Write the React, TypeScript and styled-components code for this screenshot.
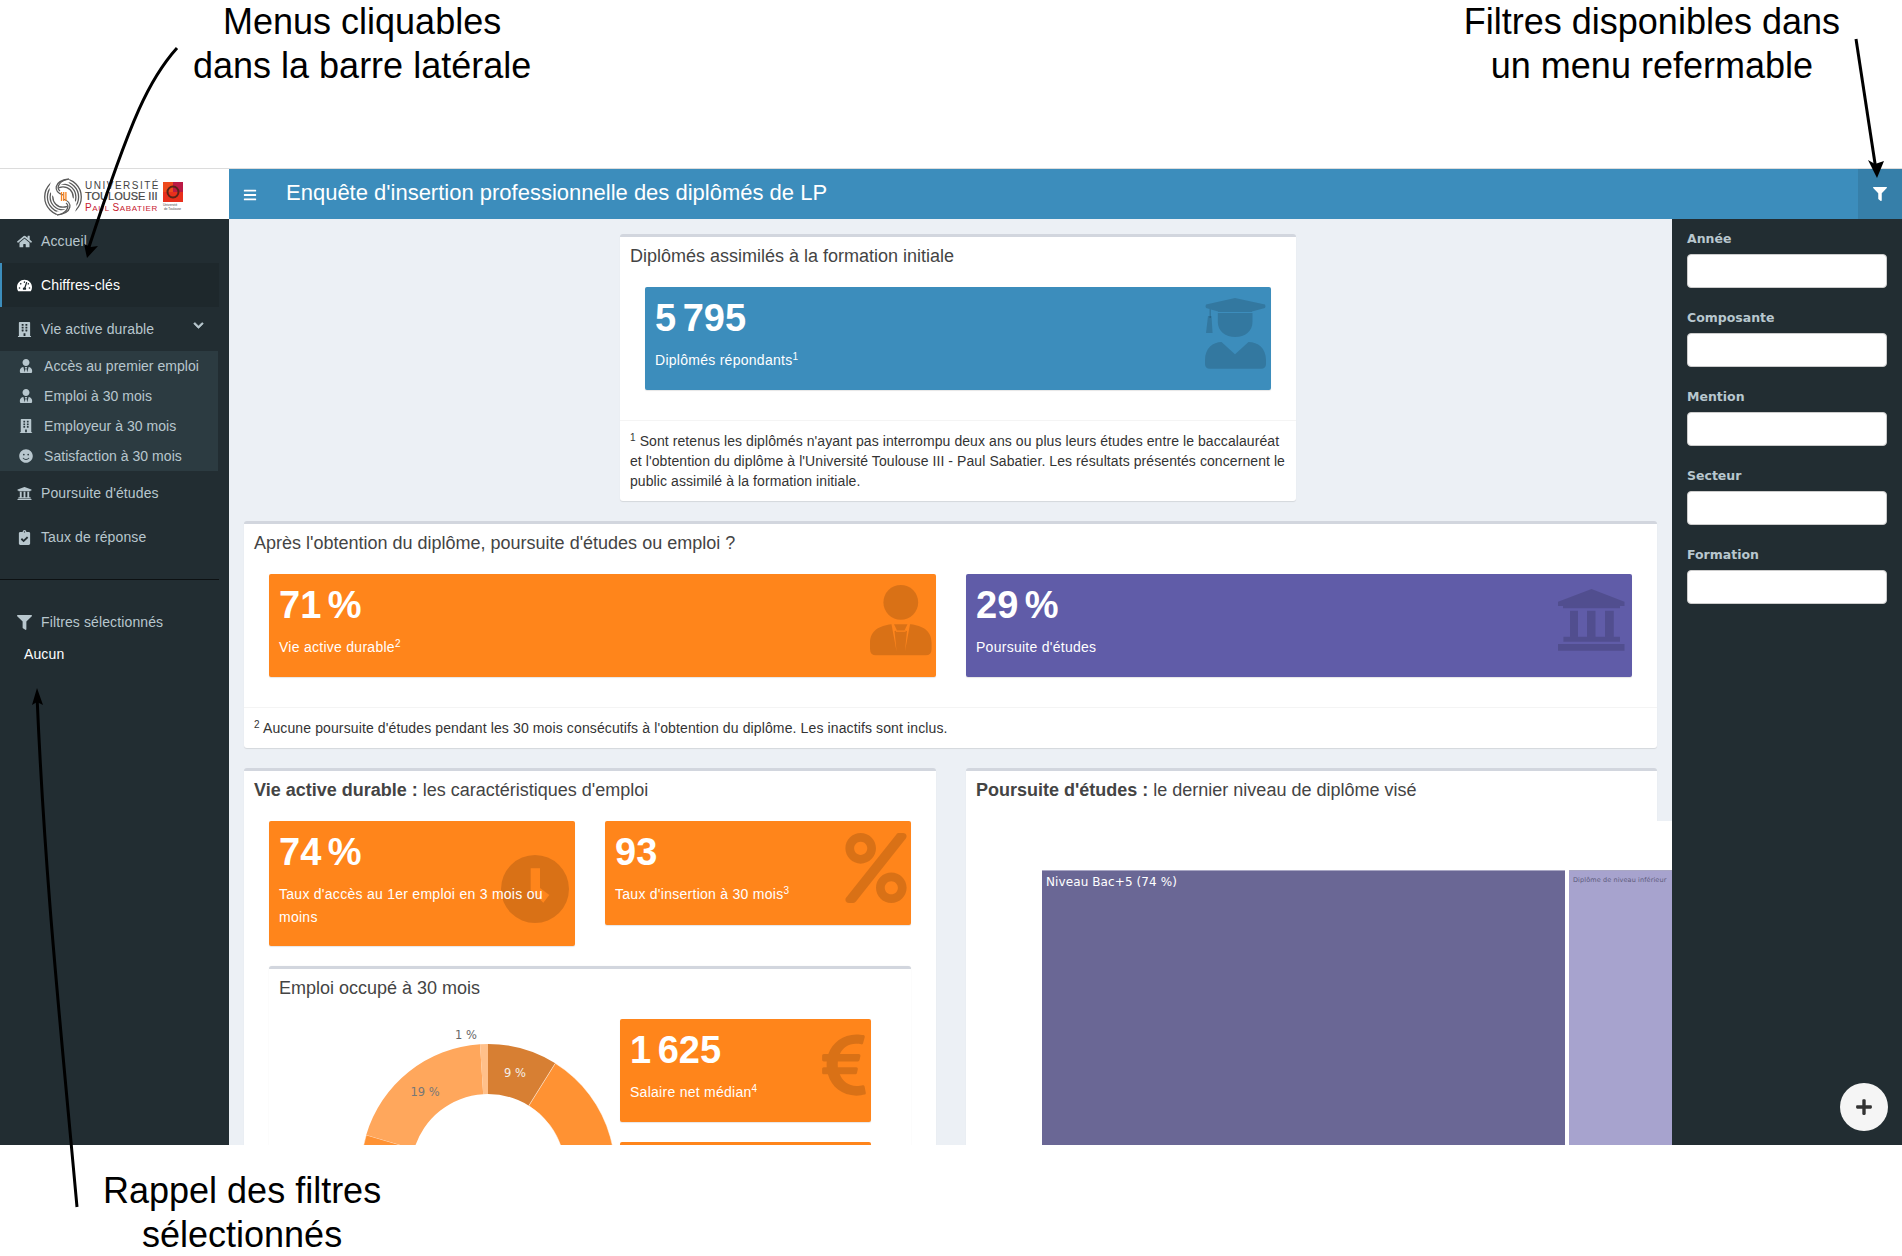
import React from "react";
import styled, { createGlobalStyle } from "styled-components";
import {
  FaHome, FaTachometerAlt, FaBuilding, FaUserTie, FaSmile, FaUniversity, FaClipboardCheck,
  FaFilter, FaChevronDown, FaBars, FaPercent, FaEuroSign, FaPlus,
} from "react-icons/fa";

const Global = createGlobalStyle`
  html, body { margin: 0; padding: 0; background: #fff; }
  body { width: 1902px; height: 1256px; overflow: hidden; font-family: "Liberation Sans", Arial, sans-serif; color: #333; }
  * { box-sizing: border-box; }
  sup { font-size: 10px; line-height: 0; position: relative; top: -0.5em; vertical-align: baseline; }
`;

const Page = styled.div`
  position: relative;
  width: 1902px;
  height: 1256px;
  display: flex;
  flex-direction: column;
`;
const Notes = styled.div`
  height: 168px;
  flex: none;
  display: flex;
  justify-content: space-between;
  padding: 0 62px 0 193px;
`;
const Note = styled.div`
  font-size: 36px;
  line-height: 44px;
  color: #000;
  text-align: center;
  white-space: nowrap;
`;
const BottomNotes = styled(Notes)`
  height: 111px;
  padding: 24px 0 0 103px;
`;
const Frame = styled.div`
  flex: none;
  height: 977px;
  border-top: 1px solid #dcdcdc;
  display: grid;
  grid-template-columns: 229px 1fr 230px;
  grid-template-rows: 50px 1fr;
  overflow: hidden;
`;
const LogoCell = styled.div`
  background: #fff;
  display: flex;
`;
const TopBar = styled.div`
  grid-column: 2 / 4;
  background: #3c8dbc;
  display: flex;
  align-items: center;
  color: #fff;
  padding-left: 14px;
`;
const Burger = styled.span`
  display: flex;
  font-size: 14px;
  margin-top: 2px;
`;
const AppTitle = styled.h1`
  margin: 0 0 0 29px;
  padding-bottom: 2px;
  font-size: 22px;
  line-height: 48px;
  font-weight: 400;
  flex: 1;
`;
const FilterToggle = styled.button`
  width: 44px;
  height: 50px;
  border: 0;
  padding: 0;
  background: #367fa9;
  color: #fff;
  font-size: 14px;
  display: flex;
  align-items: center;
  justify-content: center;
`;
const Side = styled.nav`
  background: #222d32;
  width: 229px;
  color: #b8c7ce;
  font-size: 14px;
  letter-spacing: 0.12px;
`;
const Item = styled.div<{ $active?: boolean }>`
  width: 219px;
  height: 44px;
  display: flex;
  align-items: center;
  position: relative;
  color: ${(p) => (p.$active ? "#fff" : "#b8c7ce")};
  background: ${(p) => (p.$active ? "#1e282c" : "transparent")};
  border-left: 2px solid ${(p) => (p.$active ? "#3c8dbc" : "transparent")};
  padding-left: 15px;
`;
const ItemIcon = styled.span`
  width: 24px;
  flex: none;
  display: flex;
  font-size: 15px;
`;
const Chevron = styled.span`
  position: absolute;
  right: 15px;
  top: 13px;
  display: flex;
  font-size: 11px;
  svg { stroke-width: 30px; }
`;
const Sub = styled.div`
  width: 218px;
  background: #2c3b41;
  color: #b8c7ce;
  letter-spacing: 0.04px;
`;
const SubItem = styled.div`
  height: 30px;
  display: flex;
  align-items: center;
  padding-left: 19px;
`;
const SubIcon = styled.span`
  width: 25px;
  flex: none;
  display: flex;
  font-size: 14px;
`;
const Rule = styled.hr`
  width: 219px;
  margin: 20px 0;
  border: 0;
  border-top: 1px solid #0d1113;
`;
const Chosen = styled.div`
  padding-left: 24px;
  color: #fff;
  font-size: 14px;
  line-height: 20px;
`;
const Main = styled.main`
  background: #ecf0f5;
  padding: 15px 15px 0;
  overflow: hidden;
  min-width: 0;
  position: relative;
`;
const Box = styled.section<{ $width?: string; $plain?: boolean }>`
  background: #fff;
  border-top: 3px solid #d2d6de;
  border-radius: 3px;
  box-shadow: ${(p) => (p.$plain ? "0 0 1px rgba(0,0,0,.12)" : "0 1px 1px rgba(0,0,0,.1)")};
  width: ${(p) => p.$width || "auto"};
`;
const TopRow = styled.div`
  display: flex;
  justify-content: center;
  padding-left: 15px;
  margin-bottom: 20px;
`;
const Head = styled.h3`
  margin: 0;
  padding: 9px 10px 11px;
  font-size: 18px;
  line-height: 20px;
  font-weight: 400;
  color: #444;
  b { font-weight: 700; }
`;
const Body = styled.div`
  padding: 10px 25px 30px;
`;
const Foot = styled.div<{ $spacing: number }>`
  border-top: 1px solid #f4f4f4;
  padding: 10px;
  font-size: 14px;
  line-height: 20px;
  letter-spacing: ${(p) => p.$spacing}px;
  color: #333;
`;
const Tile = styled.div<{ $bg: string; $h: number }>`
  position: relative;
  overflow: hidden;
  background: ${(p) => p.$bg};
  height: ${(p) => p.$h}px;
  border-radius: 2px;
  box-shadow: 0 1px 1px rgba(0,0,0,.1);
  color: #fff;
  padding: 10px;
`;
const Big = styled.div`
  font-size: 38px;
  line-height: 42px;
  font-weight: 700;
  margin-bottom: 10px;
  word-spacing: -4px;
  white-space: nowrap;
`;
const Label = styled.div`
  font-size: 14px;
  line-height: 22.5px;
  letter-spacing: 0.27px;
  position: relative;
  z-index: 1;
`;
const Ghost = styled.span<{ $size: number; $top: number; $right: number }>`
  position: absolute;
  top: ${(p) => p.$top}px;
  right: ${(p) => p.$right}px;
  font-size: ${(p) => p.$size}px;
  display: flex;
  color: rgba(0,0,0,.15);
`;
const TwoTiles = styled.div`
  display: grid;
  grid-template-columns: 667px 666px;
  column-gap: 30px;
  padding: 10px 25px 30px;
`;
const Split = styled.div`
  display: grid;
  grid-template-columns: 692px 691px;
  column-gap: 30px;
  margin-top: 20px;
  align-items: start;
`;
const Column = styled.section`
  background: #fff;
  border-top: 3px solid #d2d6de;
  border-radius: 3px;
  height: 500px;
  position: relative;
  box-shadow: 0 1px 1px rgba(0,0,0,.1);
`;
const SmallPair = styled.div`
  display: grid;
  grid-template-columns: 306px 306px;
  column-gap: 30px;
  align-items: start;
  padding: 10px 25px 20px;
`;
const Inner = styled(Box)`
  margin: 0 25px;
`;
const InnerBody = styled.div`
  display: grid;
  grid-template-columns: 351px 251px;
  padding-top: 10px;
`;
const DonutWrap = styled.div`
  height: 170px;
  position: relative;
`;
const Side2 = styled.div`
  display: flex;
  flex-direction: column;
  gap: 20px;
`;
const ChartPane = styled.div`
  position: absolute;
  left: 0;
  right: -15px;
  top: 50px;
  height: 450px;
  background: #fff;
  padding: 49px 0 0 76px;
  display: flex;
  gap: 4px;
  overflow: hidden;
`;
const Tree = styled.div<{ $bg: string; $w: number }>`
  width: ${(p) => p.$w}px;
  flex: none;
  height: 400px;
  background: ${(p) => p.$bg};
  border-top: 1px solid #a9a7c4;
  padding: 4px;
  color: #fff;
  font-family: "DejaVu Sans", sans-serif;
  font-size: 12px;
  letter-spacing: 0.1px;
  line-height: 14px;
  white-space: nowrap;
`;
const TinyLabel = styled.span`
  font-size: 6.5px;
  color: #5d5b7c;
  line-height: 10px;
  display: block;
`;
const FilterPanel = styled.aside`
  background: #222d32;
  padding: 12px 15px 0;
  position: relative;
`;
const Field = styled.div`
  margin-bottom: 22px;
`;
const FieldLabel = styled.label`
  display: block;
  color: #b8c7ce;
  font-family: "DejaVu Sans", sans-serif;
  font-weight: 700;
  font-size: 12.5px;
  line-height: 16px;
  margin-bottom: 7px;
`;
const Input = styled.div`
  height: 34px;
  width: 200px;
  background: #fff;
  border: 1px solid #ccc;
  border-radius: 4px;
`;
const Fab = styled.button`
  position: absolute;
  left: 168px;
  top: 864px;
  width: 48px;
  height: 48px;
  border-radius: 50%;
  border: 0;
  padding: 0;
  background: #f5f5f5;
  color: #333;
  font-size: 18px;
  display: flex;
  align-items: center;
  justify-content: center;
`;
const Arrows = styled.svg`
  position: absolute;
  inset: 0;
  width: 1902px;
  height: 1256px;
  pointer-events: none;
`;
const ChartText = styled.text<{ $fill: string }>`
  font-family: "DejaVu Sans", sans-serif;
  font-size: 11.5px;
  fill: ${(p) => p.$fill};
`;

const Logo = () => (
  <svg width="229" height="50" viewBox="0 0 229 50">
    <g fill="none" stroke="#5a5a5a" strokeWidth="1.3">
      <circle cx="63" cy="28" r="18.3" />
      <circle cx="63" cy="28" r="15.6" />
      <circle cx="63" cy="28" r="12.9" />
      <circle cx="63" cy="28" r="10.2" />
      <path d="M69 9C50 11 50 24 63 28C76 32 76 45 57 47" stroke="#fff" strokeWidth="9" />
      <path d="M69 10C53 12 53 23 63 26" />
      <path d="M57 46C73 44 73 33 63 30" />
      <path d="M66 10.500C57 14 57 20 60 22" />
      <path d="M60 45.500C69 42 69 36 66 34" />
    </g>
    <path d="M61.500 23v9M63.700 23v9M65.900 23v9" stroke="#f58220" strokeWidth="1.300" />
    <g fontFamily="Liberation Sans, sans-serif">
      <text x="85" y="20" fontSize="10" fill="#444" letterSpacing="1.5">UNIVERSITÉ</text>
      <text x="85" y="31" fontSize="11" fill="#444" stroke="#444" strokeWidth=".2">TOULOUSE III</text>
      <text x="85" y="42" fontSize="8" fill="#c8202f" letterSpacing=".65">
        <tspan fontSize="10">P</tspan>AUL <tspan fontSize="10">S</tspan>ABATIER
      </text>
      <text x="163" y="37" fontSize="3.200" fill="#444">Université</text>
      <text x="164" y="41" fontSize="3.200" fill="#444">de Toulouse</text>
    </g>
    <rect x="163" y="13" width="10" height="10" fill="#ee4a1c" />
    <rect x="173" y="13" width="10" height="10" fill="#bb1a45" />
    <rect x="163" y="23" width="20" height="10" fill="#e8301c" />
    <circle cx="173" cy="23" r="5.500" fill="none" stroke="#5a2418" strokeWidth="2" />
  </svg>
);

const Clock = () => (
  <svg width="68" height="68" viewBox="0 0 68 68">
    <path
      fillRule="evenodd"
      d="M34 0a34 34 0 1 0 0 68 34 34 0 0 0 0-68zM29.700 13.300H39V33L48.300 40 42.300 47.700 29.700 35z"
      fill="currentColor"
    />
  </svg>
);

const Graduate = () => (
  <svg width="61" height="71" viewBox="0 0 61 71" fill="currentColor">
    <path d="M30 0L60 6.500Q61 8.300 60 10L47 13.500V14H13V13.500L6 11.500V20H4.500V11L1 10Q0 8.300 1 6.500Z" />
    <path d="M12.800 15H47.500V24C47.500 33 40 39 30.200 39S12.800 33 12.800 24Z" />
    <path d="M3 18H6.500L7.600 35H1Z" />
    <path d="M0 62C0 50 8 44 16.500 44L30 56.300 43.500 44C53 44 61 50 61 62V66Q61 70.700 56 70.700H5Q0 70.700 0 66Z" />
  </svg>
);

const Suit = () => (
  <svg width="62" height="71" viewBox="0 0 62 71" fill="currentColor">
    <ellipse cx="30.800" cy="17.400" rx="17.400" ry="17.400" />
    <path
      fillRule="evenodd"
      d="M6 70.300Q0 70.300 0 64V58C0 45 10 41 21 39.300H41C52 41 61.600 45 61.600 58V64Q61.600 70.300 55.600 70.300ZM21.500 39.300L24 39.300 27 45.500 24.500 46 26.500 66ZM40 39.300L37.500 39.300 34.500 45.500 37 46 35 66ZM26 45.500H35.600V46.800H26Z"
    />
  </svg>
);

const Bank = () => (
  <svg width="67" height="62" viewBox="0 0 67 62" fill="currentColor">
    <path d="M0 12.700L33.500 0 66.500 12.700V17H62V19.300H5V17H0Z" />
    <path d="M12 21.700H20V47.700H12ZM29 21.700H37.500V47.700H29ZM47 21.700H55.800V47.700H47Z" />
    <path d="M5.400 47.700H62V52.700H5.400ZM0 55H66.500V61.700H0Z" />
  </svg>
);

const sector = (a0: number, a1: number, R: number, r: number, cx: number, cy: number) => {
  const p = (a: number, q: number) => {
    const t = (a * Math.PI) / 180;
    return `${(cx + q * Math.sin(t)).toFixed(2)} ${(cy - q * Math.cos(t)).toFixed(2)}`;
  };
  const large = a1 - a0 > 180 ? 1 : 0;
  return `M${p(a0, R)}A${R} ${R} 0 ${large} 1 ${p(a1, R)}L${p(a1, r)}A${r} ${r} 0 ${large} 0 ${p(a0, r)}Z`;
};

const Donut = () => (
  <svg width="351" height="170" viewBox="0 0 351 170">
    <path d={sector(0, 32, 127, 77, 219, 152)} fill="#d77f33" />
    <path d={sector(32, 286.5, 127, 77, 219, 152)} fill="#ff9233" stroke="#fff" strokeWidth=".5" />
    <path d={sector(286.5, 356.4, 127, 77, 219, 152)} fill="#ffa75c" />
    <path d={sector(356.4, 360, 127, 77, 219, 152)} fill="#ffc08a" />
    <ChartText x="197" y="20" textAnchor="middle" $fill="#666">1 %</ChartText>
    <ChartText x="246" y="58" textAnchor="middle" $fill="#f4efe9">9 %</ChartText>
    <ChartText x="156" y="77" textAnchor="middle" $fill="#777">19 %</ChartText>
  </svg>
);

const sideItems = [
  { icon: <FaUserTie />, label: "Accès au premier emploi" },
  { icon: <FaUserTie />, label: "Emploi à 30 mois" },
  { icon: <FaBuilding />, label: "Employeur à 30 mois" },
  { icon: <FaSmile />, label: "Satisfaction à 30 mois" },
];
const fields = ["Année", "Composante", "Mention", "Secteur", "Formation"];

export default function App() {
  return (
    <Page>
      <Global />
      <Notes>
        <Note>Menus cliquables<br />dans la barre latérale</Note>
        <Note>Filtres disponibles dans<br />un menu refermable</Note>
      </Notes>
      <Frame>
        <LogoCell><Logo /></LogoCell>
        <TopBar>
          <Burger><FaBars /></Burger>
          <AppTitle>Enquête d'insertion professionnelle des diplômés de LP</AppTitle>
          <FilterToggle aria-label="Filtres"><FaFilter /></FilterToggle>
        </TopBar>
        <Side>
          <Item><ItemIcon><FaHome /></ItemIcon>Accueil</Item>
          <Item $active><ItemIcon><FaTachometerAlt /></ItemIcon>Chiffres-clés</Item>
          <Item>
            <ItemIcon><FaBuilding /></ItemIcon>Vie active durable
            <Chevron><FaChevronDown /></Chevron>
          </Item>
          <Sub>
            {sideItems.map((s) => (
              <SubItem key={s.label}><SubIcon>{s.icon}</SubIcon>{s.label}</SubItem>
            ))}
          </Sub>
          <Item><ItemIcon><FaUniversity /></ItemIcon>Poursuite d'études</Item>
          <Item><ItemIcon><FaClipboardCheck /></ItemIcon>Taux de réponse</Item>
          <Rule />
          <Item><ItemIcon><FaFilter /></ItemIcon>Filtres sélectionnés</Item>
          <Chosen>Aucun</Chosen>
        </Side>
        <Main>
          <TopRow>
            <Box $width="676px">
              <Head>Diplômés assimilés à la formation initiale</Head>
              <Body>
                <Tile $bg="#3c8dbc" $h={103}>
                  <Big>5 795</Big>
                  <Label>Diplômés répondants<sup>1</sup></Label>
                  <Ghost $size={70} $top={11} $right={5}><Graduate /></Ghost>
                </Tile>
              </Body>
              <Foot $spacing={0.08}>
                <sup>1</sup> Sont retenus les diplômés n'ayant pas interrompu deux ans ou plus leurs études entre le baccalauréat et l'obtention du diplôme à l'Université Toulouse III - Paul Sabatier. Les résultats présentés concernent le public assimilé à la formation initiale.
              </Foot>
            </Box>
          </TopRow>
          <Box>
            <Head>Après l'obtention du diplôme, poursuite d'études ou emploi ?</Head>
            <TwoTiles>
              <Tile $bg="#ff851b" $h={103}>
                <Big>71 %</Big>
                <Label>Vie active durable<sup>2</sup></Label>
                <Ghost $size={70} $top={11} $right={4}><Suit /></Ghost>
              </Tile>
              <Tile $bg="#605ca8" $h={103}>
                <Big>29 %</Big>
                <Label>Poursuite d'études</Label>
                <Ghost $size={62} $top={15} $right={7}><Bank /></Ghost>
              </Tile>
            </TwoTiles>
            <Foot $spacing={0.12}><sup>2</sup> Aucune poursuite d'études pendant les 30 mois consécutifs à l'obtention du diplôme. Les inactifs sont inclus.</Foot>
          </Box>
          <Split>
            <Column>
              <Head><b>Vie active durable :</b> les caractéristiques d'emploi</Head>
              <SmallPair>
                <Tile $bg="#ff851b" $h={125}>
                  <Big>74 %</Big>
                  <Label>Taux d'accès au 1er emploi en 3 mois ou moins</Label>
                  <Ghost $size={68} $top={34} $right={6}><Clock /></Ghost>
                </Tile>
                <Tile $bg="#ff851b" $h={104}>
                  <Big>93</Big>
                  <Label>Taux d'insertion à 30 mois<sup>3</sup></Label>
                  <Ghost $size={70} $top={12} $right={0}><FaPercent /></Ghost>
                </Tile>
              </SmallPair>
              <Inner $plain>
                <Head>Emploi occupé à 30 mois</Head>
                <InnerBody>
                  <DonutWrap><Donut /></DonutWrap>
                  <Side2>
                    <Tile $bg="#ff851b" $h={103}>
                      <Big>1 625</Big>
                      <Label>Salaire net médian<sup>4</sup></Label>
                      <Ghost $size={70} $top={11} $right={-8}><FaEuroSign /></Ghost>
                    </Tile>
                    <Tile $bg="#ff851b" $h={103} />
                  </Side2>
                </InnerBody>
              </Inner>
            </Column>
            <Column>
              <Head><b>Poursuite d'études :</b> le dernier niveau de diplôme visé</Head>
              <ChartPane>
                <Tree $bg="#6a6795" $w={523}>Niveau Bac+5 (74 %)</Tree>
                <Tree $bg="#a7a3ce" $w={200}><TinyLabel>Diplôme de niveau inférieur</TinyLabel></Tree>
              </ChartPane>
            </Column>
          </Split>
        </Main>
        <FilterPanel>
          {fields.map((f) => (
            <Field key={f}>
              <FieldLabel>{f}</FieldLabel>
              <Input />
            </Field>
          ))}
          <Fab aria-label="Ajouter"><FaPlus /></Fab>
        </FilterPanel>
      </Frame>
      <BottomNotes>
        <Note>Rappel des filtres<br />sélectionnés</Note>
      </BottomNotes>
      <Arrows viewBox="0 0 1902 1256">
        <g fill="none" stroke="#000" strokeWidth="3">
          <path d="M177 48C150 78 132 115 88 250" />
          <path d="M1856 39L1876 170" />
          <path d="M77 1207C60 1020 45 880 37 696" />
        </g>
        <path d="M87 258L84 244 91 247 98 246Z" fill="#000" />
        <path d="M1877 178L1868 160 1875 164 1884 161Z" fill="#000" />
        <path d="M37 688L32 705 37 702 43 705Z" fill="#000" />
      </Arrows>
    </Page>
  );
}
